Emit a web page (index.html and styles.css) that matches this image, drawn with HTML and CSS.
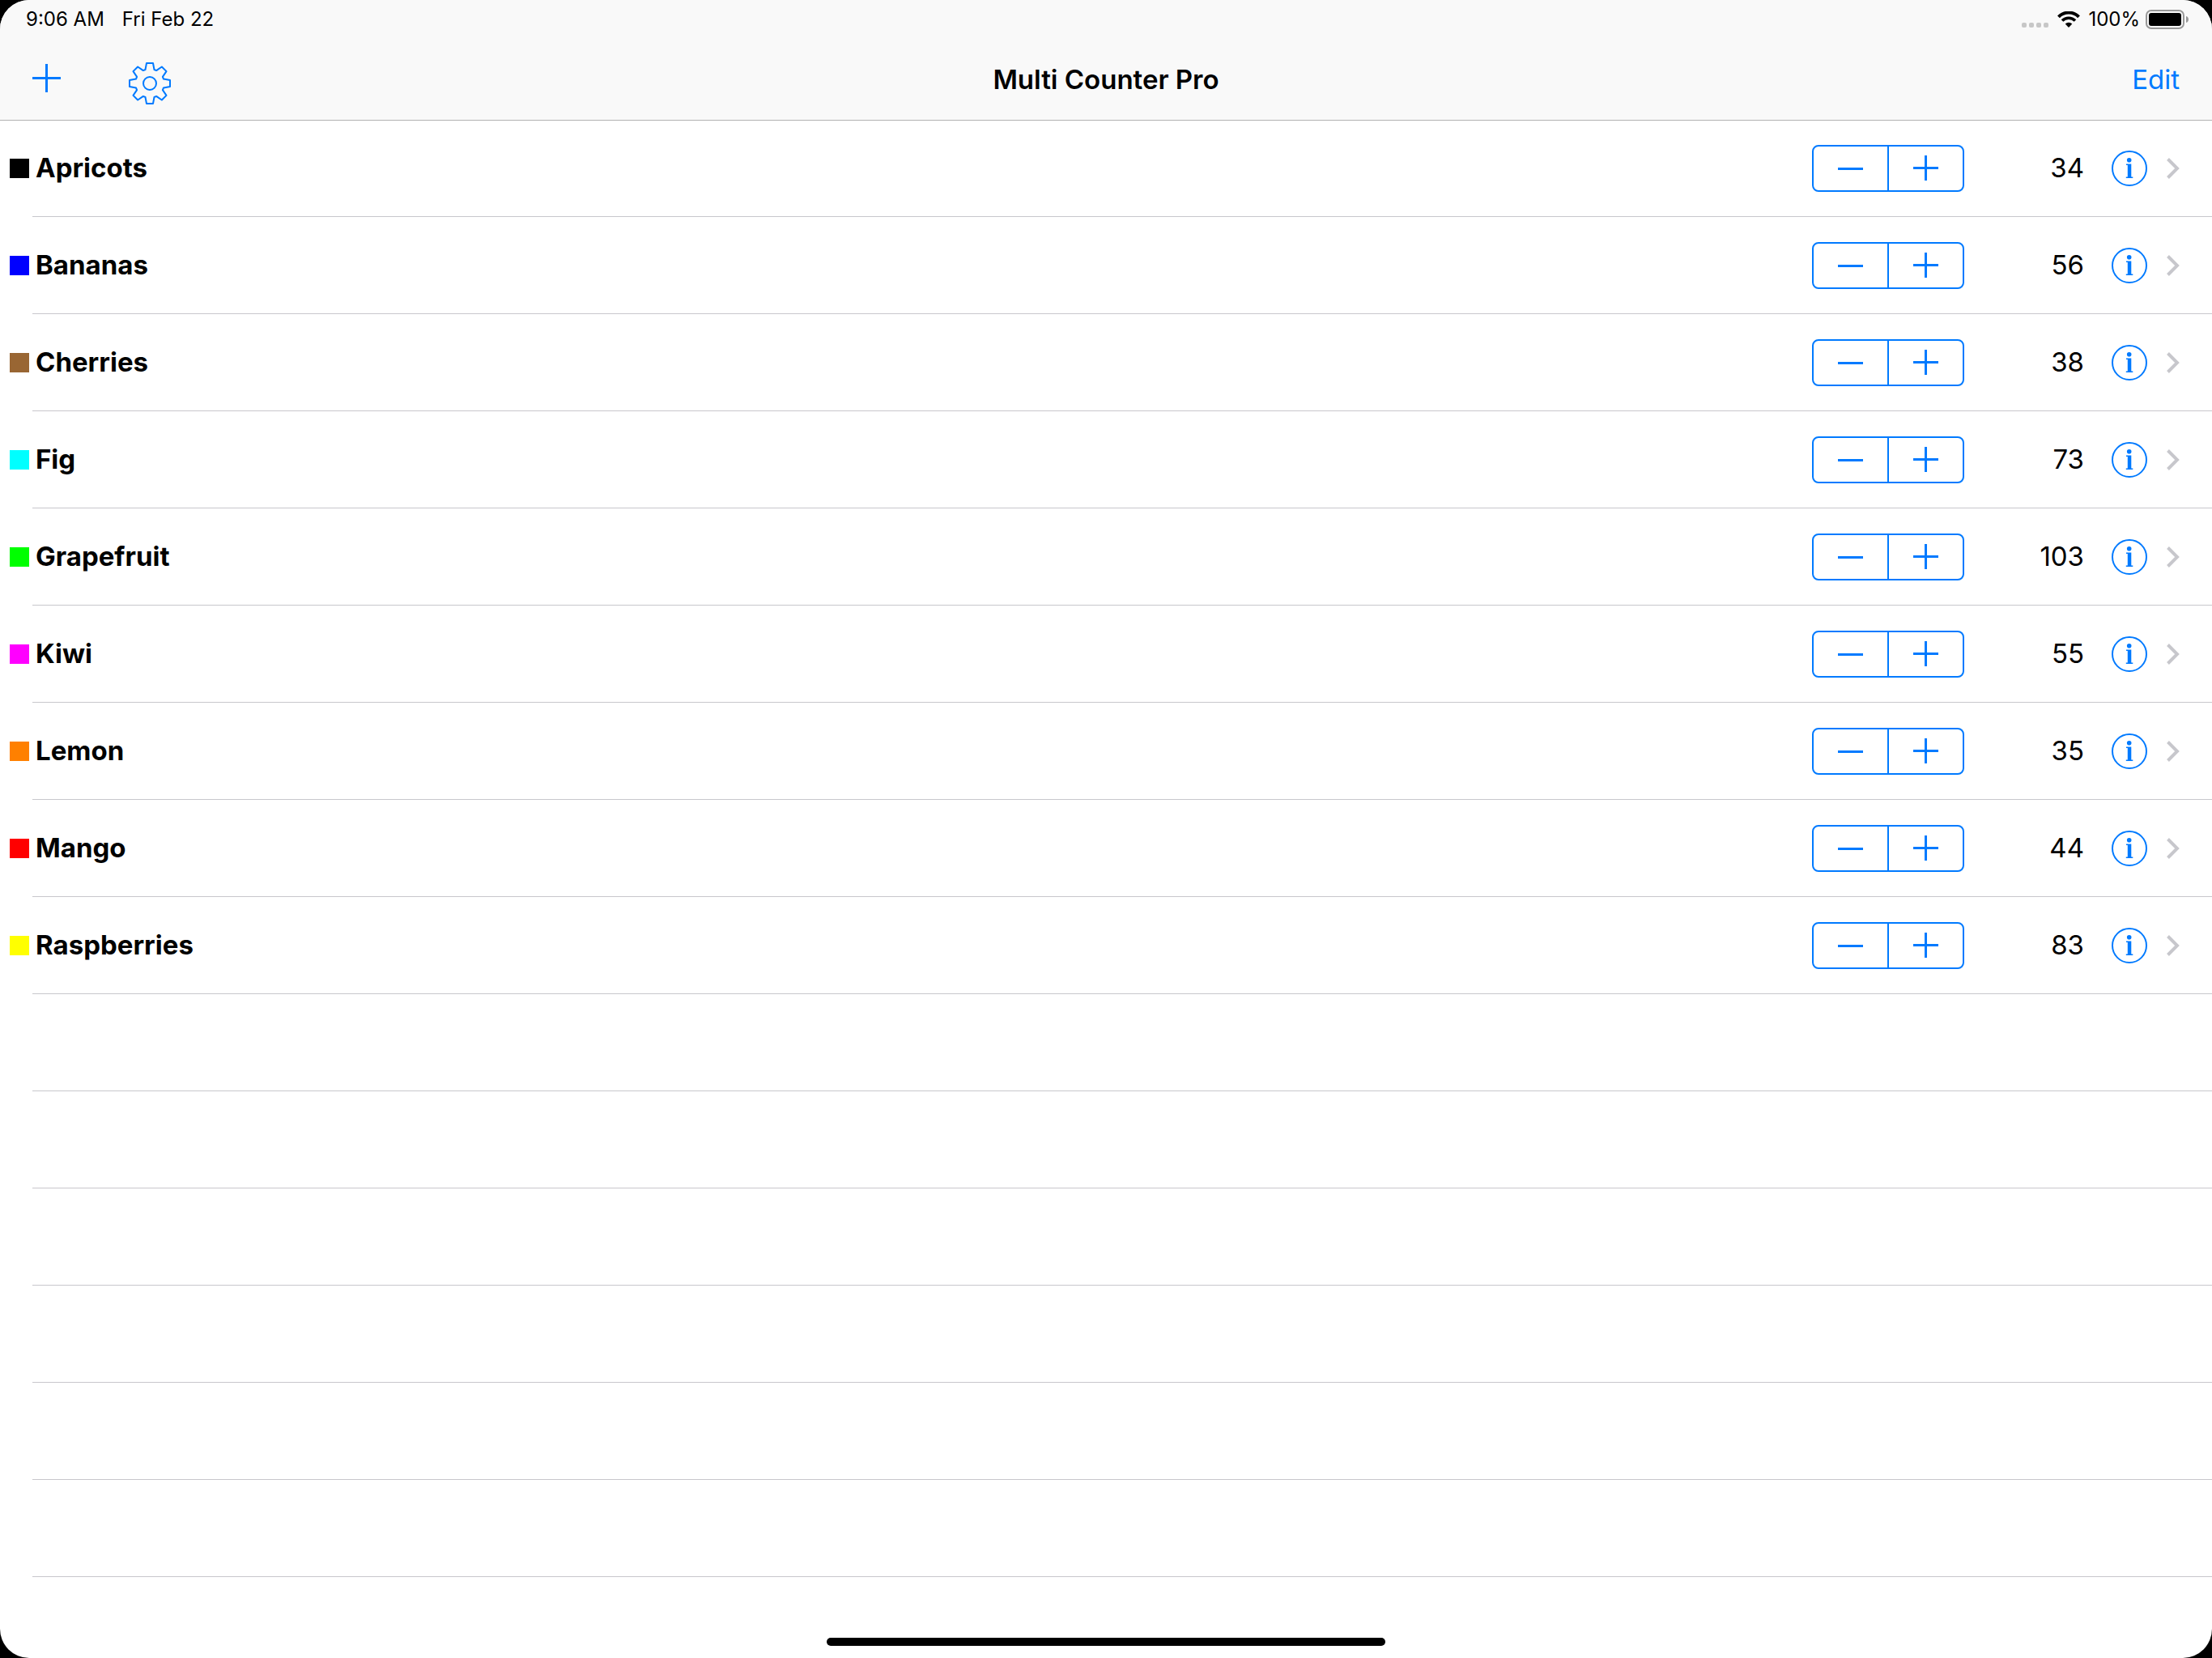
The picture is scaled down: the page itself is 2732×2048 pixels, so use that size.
FILE: index.html
```
<!DOCTYPE html>
<html lang="en">
<head>
    <meta charset="UTF-8">
    <meta name="viewport" content="width=device-width, initial-scale=1.0">
    <title>Multi Counter Pro</title>
    <link rel="stylesheet" href="styles.css">
</head>
<body>
    <div class="screen">
        <header class="top">
            <div class="status-bar">
                <span>9:06 AM</span>
                <span>Fri Feb 22</span>
                <div class="status-right">
                    <svg class="signal" width="34" height="6" viewBox="0 0 34 6" fill="#c7c7c7">
                        <rect x="0" width="6" height="6" rx="2"/>
                        <rect x="9" width="6" height="6" rx="2"/>
                        <rect x="18" width="6" height="6" rx="2"/>
                        <rect x="27" width="6" height="6" rx="2"/>
                    </svg>
                    <svg class="wifi" width="28" height="20" viewBox="0 0 28 20">
                        <path d="M1.5 6.8a17.6 17.6 0 0 1 25 0" fill="none" stroke="#000" stroke-width="4"/>
                        <path d="M6 11.6a11.3 11.3 0 0 1 16 0" fill="none" stroke="#000" stroke-width="3.6"/>
                        <path d="M14 20l-4.3-4.4a6.2 6.2 0 0 1 8.6 0z"/>
                    </svg>
                    <span>100%</span>
                    <svg class="battery" width="54" height="24" viewBox="0 0 54 24">
                        <rect x="1" y="1" width="46" height="22" rx="6" fill="none" stroke="#999" stroke-width="2"/>
                        <rect x="4" y="4" width="40" height="16" rx="3"/>
                        <path d="M50 8c4 1 4 7 0 8z" fill="#999"/>
                    </svg>
                </div>
            </div>
            <nav class="nav-bar">
                <div class="nav-left">
                    <button class="add" aria-label="Add counter">
                        <svg width="35" height="35" viewBox="0 0 35 35"><path d="M0 17.5h35M17.5 0v35" stroke="currentColor" stroke-width="3"/></svg>
                    </button>
                    <button class="gear" aria-label="Settings">
                        <svg id="gear" width="52" height="52" viewBox="-26 -26 52 52" fill="none" stroke="currentColor" stroke-width="2" stroke-linejoin="round"></svg>
                    </button>
                </div>
                <h1>Multi Counter Pro</h1>
                <button class="edit-button">Edit</button>
            </nav>
        </header>
        <ul class="counters" id="counters"></ul>
        <div class="home-indicator"></div>
    </div>

    <script>
        const TOTAL_ROWS = 15;
        const counters = [
            { name: 'Apricots', color: '#000000', count: 34 },
            { name: 'Bananas', color: '#0000ff', count: 56 },
            { name: 'Cherries', color: '#996633', count: 38 },
            { name: 'Fig', color: '#00ffff', count: 73 },
            { name: 'Grapefruit', color: '#00ff00', count: 103 },
            { name: 'Kiwi', color: '#ff00ff', count: 55 },
            { name: 'Lemon', color: '#ff8000', count: 35 },
            { name: 'Mango', color: '#ff0000', count: 44 },
            { name: 'Raspberries', color: '#ffff00', count: 83 }
        ];

        function changeCount(index, step) {
            counters[index].count += step;
            render();
        }

        function render() {
            let html = '';
            counters.forEach((counter, i) => {
                html += `<li class="row">
                    <span class="swatch" style="background-color: ${counter.color}"></span>
                    <span class="name">${counter.name}</span>
                    <div class="stepper">
                        <button aria-label="Decrease ${counter.name}" onclick="changeCount(${i}, -1)">
                            <svg width="31" height="32" viewBox="0 0 31 32"><path d="M0 16.5h31" stroke="currentColor" stroke-width="3"/></svg>
                        </button>
                        <button aria-label="Increase ${counter.name}" onclick="changeCount(${i}, 1)">
                            <svg width="31" height="32" viewBox="0 0 31 32"><path d="M0 15.5h31M15.5 0v31" stroke="currentColor" stroke-width="3"/></svg>
                        </button>
                    </div>
                    <span class="count">${counter.count}</span>
                    <button class="info" aria-label="About ${counter.name}">
                        <svg width="44" height="44" viewBox="0 0 44 44">
                            <circle cx="22" cy="22" r="21" fill="none" stroke="currentColor" stroke-width="2"/>
                            <circle cx="21.7" cy="11.7" r="2.8" fill="currentColor"/>
                            <path d="M18 16.500h6.300v16h2v1.500h-8.500v-1.500h2v-14.500h-1.800z" fill="currentColor"/>
                        </svg>
                    </button>
                    <svg class="chevron" width="16" height="26" viewBox="0 0 16 26"><path d="M1.500 1.500L13 13L1.500 24.500" fill="none" stroke="#c7c7cc" stroke-width="4"/></svg>
                </li>`;
            });
            for (let i = counters.length; i < TOTAL_ROWS; i++) {
                html += '<li class="row"></li>';
            }
            document.getElementById('counters').innerHTML = html;
        }

        // Eight teeth around the wheel, each one the same outline turned by 45 degrees
        function drawGear() {
            const tooth = [[-5.5, -17], [-4, -25], [4, -25], [5.5, -17]];
            const points = [];
            for (let i = 0; i < 8; i++) {
                const a = i * Math.PI / 4;
                for (const [x, y] of tooth) {
                    points.push((x * Math.cos(a) - y * Math.sin(a)).toFixed(2) + ',' + (x * Math.sin(a) + y * Math.cos(a)).toFixed(2));
                }
            }
            document.getElementById('gear').innerHTML = `<polygon points="${points.join(' ')}"/><circle r="8"/>`;
        }

        drawGear();
        render();
    </script>
</body>
</html>
```
FILE: styles.css
```
body {
    font-family: Inter, "Liberation Sans", sans-serif;
    margin: 0;
    background-color: #000;
    color: #000;
}
.screen {
    display: flex;
    flex-direction: column;
    box-sizing: border-box;
    min-height: 100vh;
    padding-bottom: 15px;
    background-color: #fff;
    border-radius: 36px;
    overflow: hidden;
}
button {
    padding: 0;
    border: none;
    background: none;
    color: #007aff;
    font-family: inherit;
    cursor: pointer;
}
svg {
    display: block;
}
.top {
    background-color: #f9f9f9;
    box-shadow: 0 1px 0 #b2b2b2;
    position: relative;
}
.status-bar {
    display: flex;
    align-items: center;
    gap: 22px;
    height: 48px;
    padding: 0 28px 0 32px;
    font-size: 24px;
}
.status-bar span {
    padding-bottom: 2px;
}
.status-right {
    display: flex;
    align-items: center;
    margin-left: auto;
}
.signal {
    margin-top: 14px;
}
.wifi {
    margin: 0 10px;
}
.battery {
    margin-left: 7px;
}
.nav-bar {
    display: grid;
    grid-template-columns: 1fr auto 1fr;
    align-items: center;
    height: 100px;
    padding: 0 40px;
}
.nav-left {
    display: flex;
    align-items: center;
    gap: 84px;
}
.add {
    padding-bottom: 3px;
}
.gear {
    margin-top: 10px;
}
h1 {
    margin: 0;
    font-size: 33px;
    font-weight: 600;
}
.edit-button {
    justify-self: end;
    font-size: 33px;
}
.counters {
    list-style: none;
    margin: 0;
    padding: 0;
}
.row {
    position: relative;
    display: flex;
    align-items: center;
    height: 120px;
    padding: 0 40px 0 12px;
    box-sizing: border-box;
    font-size: 33px;
}
.row::after {
    content: "";
    position: absolute;
    left: 40px;
    right: 0;
    bottom: 0;
    height: 1px;
    background-color: #c8c7cc;
}
.swatch {
    width: 24px;
    height: 24px;
    margin-right: 8px;
}
.name {
    flex: 1;
    padding-bottom: 2px;
    font-weight: 700;
}
.stepper {
    display: flex;
    width: 188px;
    height: 58px;
    box-sizing: border-box;
    border: 2px solid #007aff;
    border-radius: 8px;
}
.stepper button {
    flex: 1;
    display: flex;
    align-items: center;
    justify-content: center;
}
.stepper button + button {
    border-left: 2px solid #007aff;
}
.count {
    width: 148px;
    padding-bottom: 2px;
    text-align: right;
}
.info {
    margin: 0 24px 0 34px;
}
.home-indicator {
    width: 690px;
    height: 10px;
    margin: auto auto 0;
    border-radius: 5px;
    background-color: #000;
}
```
